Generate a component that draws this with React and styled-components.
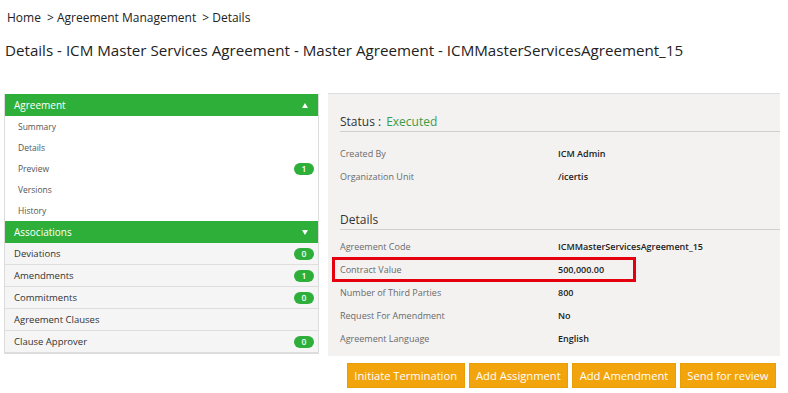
import React from "react";
import styled, { createGlobalStyle } from "styled-components";

const GlobalStyle = createGlobalStyle`
  body {
    margin: 0;
    background: #ffffff;
    font-family: "Open Sans", "Liberation Sans", sans-serif;
    color: #333;
  }
`;

const Page = styled.div`
  width: 788px;
  height: 393px;
  overflow: hidden;
  padding: 0 8px 0 4px;
  box-sizing: border-box;
`;

const Breadcrumb = styled.div`
  display: flex;
  gap: 6px;
  padding: 9px 0 0 3px;
  height: 18px;
  line-height: 18px;
  font-size: 12px;
  color: #222;
`;

const Title = styled.h1`
  margin: 0;
  padding: 11px 0 0 1px;
  height: 25px;
  line-height: 25px;
  font-size: 15.15px;
  font-weight: 400;
  color: #222;
  white-space: nowrap;
`;

const Main = styled.div`
  display: grid;
  grid-template-columns: 315px 452px;
  column-gap: 9px;
  margin-top: 31px;
`;

const SideNav = styled.div`
  border: 1px solid #dcdcdc;
  border-top: none;
  align-self: start;
`;

const GroupHeader = styled.div`
  display: flex;
  justify-content: space-between;
  align-items: center;
  height: 22px;
  padding: 0 10px 0 9px;
  background: #2eaf39;
  color: #fff;
  font-size: 10px;
`;

const Caret = styled.span`
  width: 0;
  height: 0;
  border-left: 3.5px solid transparent;
  border-right: 3.5px solid transparent;
  ${(p) =>
    p.$up
      ? "border-bottom: 5px solid #fff;"
      : "border-top: 5px solid #fff;"}
`;

const SubItem = styled.div`
  display: flex;
  justify-content: space-between;
  align-items: center;
  height: 21px;
  padding: 0 4px 0 13px;
  background: #fff;
  font-size: 8.5px;
  color: #555;
`;

const Row = styled.div`
  display: flex;
  justify-content: space-between;
  align-items: center;
  height: 21px;
  padding: 0 4px 0 9px;
  background: #f5f5f5;
  border-bottom: 1px solid #dedede;
  font-size: 9.5px;
  color: #333;
`;

const Badge = styled.span`
  display: inline-flex;
  align-items: center;
  justify-content: center;
  width: 20px;
  height: 12px;
  border-radius: 7px;
  background: #2eaf39;
  color: #fff;
  font-size: 8.5px;
  font-weight: 600;
`;

const DetailPanel = styled.div`
  background: #f3f2f1;
  border-top: 1px solid #dedede;
  height: 263px;
  margin-top: -1px;
  padding: 0 0 0 12px;
  box-sizing: border-box;
`;

const SectionTitle = styled.div`
  display: flex;
  gap: 5px;
  height: 38px;
  padding-top: 9px;
  box-sizing: border-box;
  line-height: 38px;
  font-size: 12px;
  color: #333;
  border-bottom: 1px solid #cfcfcf;
  margin-top: ${(p) => p.$top || 0}px;
`;

const StatusValue = styled.span`
  color: #3e9b48;
`;

const FieldList = styled.div`
  padding-top: ${(p) => p.$pad || 0}px;
`;

const FieldRow = styled.div`
  display: grid;
  grid-template-columns: 218px 1fr;
  height: 23px;
  align-items: center;
  font-size: 9px;
  position: relative;
`;

const FieldLabel = styled.span`
  color: #6a6a6a;
`;

const FieldValue = styled.span`
  color: #222;
  font-weight: 600;
`;

const Highlight = styled.div`
  position: absolute;
  left: -8px;
  top: -1px;
  width: 298px;
  height: 19px;
  border: 3px solid #e4000f;
  pointer-events: none;
`;

const Actions = styled.div`
  grid-column: 2;
  display: flex;
  justify-content: flex-end;
  gap: 4px;
  padding: 7px 4px 0 0;
`;

const ActionButton = styled.button`
  height: 25px;
  padding: 0 6.5px;
  border: 1px solid #e99d07;
  background: #f2a40c;
  color: #fff;
  font-family: inherit;
  font-size: 11.2px;
  white-space: nowrap;
  cursor: pointer;
`;

const agreementItems = [
  { name: "Summary" },
  { name: "Details" },
  { name: "Preview", count: 1 },
  { name: "Versions" },
  { name: "History" },
];

const associations = [
  { name: "Deviations", count: 0 },
  { name: "Amendments", count: 1 },
  { name: "Commitments", count: 0 },
  { name: "Agreement Clauses" },
  { name: "Clause Approver", count: 0 },
];

const details = [
  { label: "Agreement Code", value: "ICMMasterServicesAgreement_15" },
  { label: "Contract Value", value: "500,000.00", marked: true },
  { label: "Number of Third Parties", value: "800" },
  { label: "Request For Amendment", value: "No" },
  { label: "Agreement Language", value: "English" },
];

export default function App() {
  return (
    <Page>
      <GlobalStyle />
      <Breadcrumb>
        <span>Home</span>
        <span>&gt; Agreement Management</span>
        <span>&gt; Details</span>
      </Breadcrumb>
      <Title>
        Details - ICM Master Services Agreement - Master Agreement -
        ICMMasterServicesAgreement_15
      </Title>

      <Main>
        <SideNav>
          <GroupHeader>
            Agreement <Caret $up />
          </GroupHeader>
          {agreementItems.map((it) => (
            <SubItem key={it.name}>
              {it.name}
              {it.count !== undefined && <Badge>{it.count}</Badge>}
            </SubItem>
          ))}
          <GroupHeader>
            Associations <Caret />
          </GroupHeader>
          {associations.map((it) => (
            <Row key={it.name}>
              {it.name}
              {it.count !== undefined && <Badge>{it.count}</Badge>}
            </Row>
          ))}
        </SideNav>

        <DetailPanel>
          <SectionTitle>
            Status : <StatusValue>Executed</StatusValue>
          </SectionTitle>
          <FieldList $pad={10}>
            <FieldRow>
              <FieldLabel>Created By</FieldLabel>
              <FieldValue>ICM Admin</FieldValue>
            </FieldRow>
            <FieldRow>
              <FieldLabel>Organization Unit</FieldLabel>
              <FieldValue>/icertis</FieldValue>
            </FieldRow>
          </FieldList>
          <SectionTitle $top={4}>Details</SectionTitle>
          <FieldList $pad={5}>
            {details.map((d) => (
              <FieldRow key={d.label}>
                <FieldLabel>{d.label}</FieldLabel>
                <FieldValue>{d.value}</FieldValue>
                {d.marked && <Highlight />}
              </FieldRow>
            ))}
          </FieldList>
        </DetailPanel>

        <Actions>
          <ActionButton>Initiate Termination</ActionButton>
          <ActionButton>Add Assignment</ActionButton>
          <ActionButton>Add Amendment</ActionButton>
          <ActionButton>Send for review</ActionButton>
        </Actions>
      </Main>
    </Page>
  );
}
